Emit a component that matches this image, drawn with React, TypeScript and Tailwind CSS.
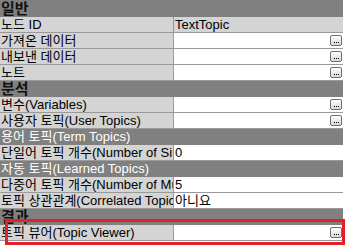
import React from "react";

const font = "font-['Liberation_Sans','Noto_Sans_CJK_KR',sans-serif]";

function DotsButton() {
  return (
    <div className="mr-[1px] flex h-[11px] w-[12px] items-end justify-center gap-[1px] rounded-[2px] border border-[#6f6f6f] bg-gradient-to-b from-white to-[#d8d8d8] pb-[2px]">
      <span className="h-[1px] w-[1px] bg-black" />
      <span className="h-[1px] w-[1px] bg-black" />
      <span className="h-[1px] w-[1px] bg-black" />
    </div>
  );
}

function Header({ label }: { label: string }) {
  return (
    <div className="flex h-[16px] items-center overflow-hidden bg-[#808080] pl-[1px] text-[15px] font-bold leading-[16px] text-[#111]">
      {label}
    </div>
  );
}

function SubHeader({ label }: { label: string }) {
  return (
    <div className="flex h-[16px] items-center overflow-hidden border-b border-[#808080] bg-[#808080] pl-[1px] text-[13px] leading-[15px] text-white">
      {label}
    </div>
  );
}

function Row({
  label,
  value,
  button,
  readOnly,
}: {
  label: string;
  value?: string;
  button?: boolean;
  readOnly?: boolean;
}) {
  return (
    <div className="flex h-[16px] border-b border-[#9a9a9a]">
      <div className="flex w-[174px] shrink-0 items-center overflow-hidden whitespace-nowrap border-r border-[#9a9a9a] bg-[#d4d4d4] pl-[1px] text-[13px] leading-[15px] text-black">
        {label}
      </div>
      <div
        className={
          "flex min-w-0 flex-1 items-center justify-between overflow-hidden whitespace-nowrap pl-[1px] text-[13px] leading-[15px] text-black " +
          (readOnly ? "bg-[#d4d4d4]" : "bg-white")
        }
      >
        <span>{value ?? ""}</span>
        {button ? <DotsButton /> : null}
      </div>
    </div>
  );
}

export default function App() {
  return (
    <div className={"relative h-[248px] w-[350px] overflow-hidden bg-white " + font}>
      <div className="w-[343px] border-t border-[#808080]">
        <Header label="일반" />
        <Row label="노드 ID" value="TextTopic" readOnly />
        <Row label="가져온 데이터" button />
        <Row label="내보낸 데이터" button />
        <Row label="노트" button />
        <Header label="분석" />
        <Row label="변수(Variables)" button />
        <Row label="사용자 토픽(User Topics)" button />
        <SubHeader label="용어 토픽(Term Topics)" />
        <Row label="단일어 토픽 개수(Number of Single Word Topics)" value="0" />
        <SubHeader label="자동 토픽(Learned Topics)" />
        <Row label="다중어 토픽 개수(Number of Multi Word Topics)" value="5" />
        <Row label="토픽 상관관계(Correlated Topics)" value="아니요" />
        <Header label="결과" />
        <Row label="토픽 뷰어(Topic Viewer)" button />
      </div>
      <div className="absolute left-[5px] top-[219px] h-[26px] w-[340px] border-[3px] border-[#e5202a]" />
    </div>
  );
}
